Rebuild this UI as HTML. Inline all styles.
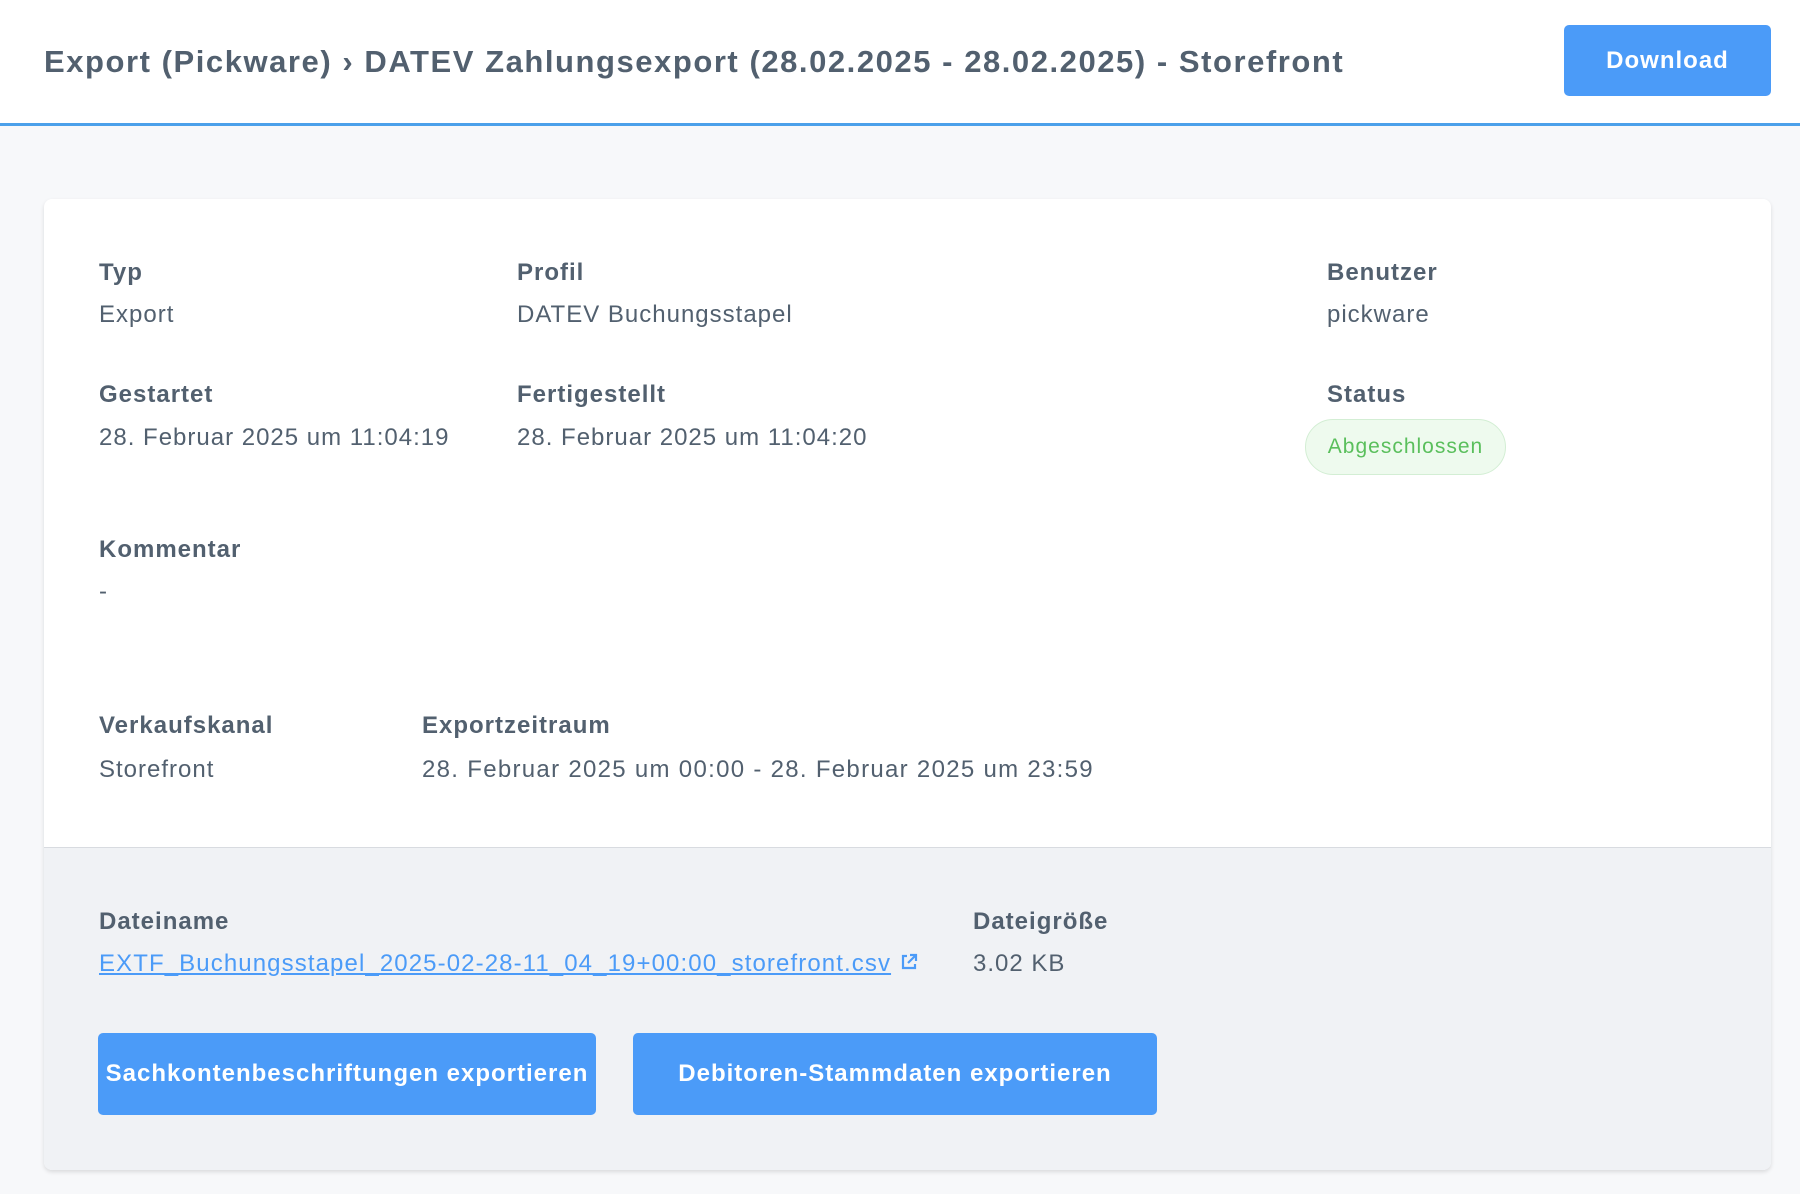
<!DOCTYPE html>
<html><head><meta charset="utf-8"><style>
*{margin:0;padding:0;box-sizing:border-box}
body{width:1800px;height:1194px;background:#f7f8fa;font-family:"Liberation Sans",sans-serif;color:#52606f;position:relative;overflow:hidden;letter-spacing:1px}
.hdr{position:absolute;left:0;top:0;width:1800px;height:126px;background:#fff;border-bottom:3px solid #4ba0ea}
.title{position:absolute;left:44px;top:44px;line-height:36px;font-size:31px;font-weight:bold;color:#52606f;white-space:nowrap;letter-spacing:1.55px}
.btn{position:absolute;background:#4b9bf8;color:#fff;font-weight:bold;font-size:24px;border-radius:5px;display:flex;align-items:center;justify-content:center;white-space:nowrap}
.card{position:absolute;left:44px;top:199px;width:1727px;height:971px;background:#fff;border-radius:8px;box-shadow:0 2px 4px rgba(0,0,0,.12);overflow:hidden}
.gray{position:absolute;left:0;top:648px;width:100%;height:323px;background:#f0f2f5;border-top:1px solid #d8dbe0}
.t{position:absolute;line-height:30px;font-size:24px;white-space:nowrap;margin-top:2px}
.l{font-weight:bold}
.badge{position:absolute;left:1305px;top:419px;width:201px;height:56px;border-radius:28px;background:#eefaee;border:1px solid #d3eed4;color:#5abf5c;font-size:21px;display:flex;align-items:center;justify-content:center}
a{color:#4b9bf8}
</style></head><body>
<div class="hdr"><div class="title">Export (Pickware) › DATEV Zahlungsexport (28.02.2025 - 28.02.2025) - Storefront</div></div>
<div class="btn" style="left:1564px;top:25px;width:207px;height:71px">Download</div>
<div class="card"><div class="gray"></div></div>
<div class="t l" style="left:99px;top:256px">Typ</div>
<div class="t" style="left:99px;top:298px">Export</div>
<div class="t l" style="left:517px;top:256px">Profil</div>
<div class="t" style="left:517px;top:298px">DATEV Buchungsstapel</div>
<div class="t l" style="left:1327px;top:256px">Benutzer</div>
<div class="t" style="left:1327px;top:298px">pickware</div>
<div class="t l" style="left:99px;top:378px">Gestartet</div>
<div class="t" style="left:99px;top:421px">28. Februar 2025 um 11:04:19</div>
<div class="t l" style="left:517px;top:378px">Fertigestellt</div>
<div class="t" style="left:517px;top:421px">28. Februar 2025 um 11:04:20</div>
<div class="t l" style="left:1327px;top:378px">Status</div>
<div class="badge">Abgeschlossen</div>
<div class="t l" style="left:99px;top:533px">Kommentar</div>
<div class="t" style="left:99px;top:575px">-</div>
<div class="t l" style="left:99px;top:709px">Verkaufskanal</div>
<div class="t" style="left:99px;top:753px">Storefront</div>
<div class="t l" style="left:422px;top:709px">Exportzeitraum</div>
<div class="t" style="left:422px;top:753px;letter-spacing:1.3px">28. Februar 2025 um 00:00 - 28. Februar 2025 um 23:59</div>
<div class="t l" style="left:99px;top:905px">Dateiname</div>
<div class="t" style="left:99px;top:947px;color:#4b9bf8"><a style="text-decoration:underline;letter-spacing:1.1px">EXTF_Buchungsstapel_2025-02-28-11_04_19+00:00_storefront.csv</a> <svg width="20" height="20" viewBox="0 0 20 20" style="vertical-align:-1px"><path d="M8 4H4v12h12v-4M11 3h6v6M17 3l-8 8" fill="none" stroke="#4b9bf8" stroke-width="2.2"/></svg></div>
<div class="t l" style="left:973px;top:905px">Dateigröße</div>
<div class="t" style="left:973px;top:947px">3.02 KB</div>
<div class="btn" style="left:98px;top:1033px;width:498px;height:82px">Sachkontenbeschriftungen exportieren</div>
<div class="btn" style="left:633px;top:1033px;width:524px;height:82px">Debitoren-Stammdaten exportieren</div>
</body></html>
